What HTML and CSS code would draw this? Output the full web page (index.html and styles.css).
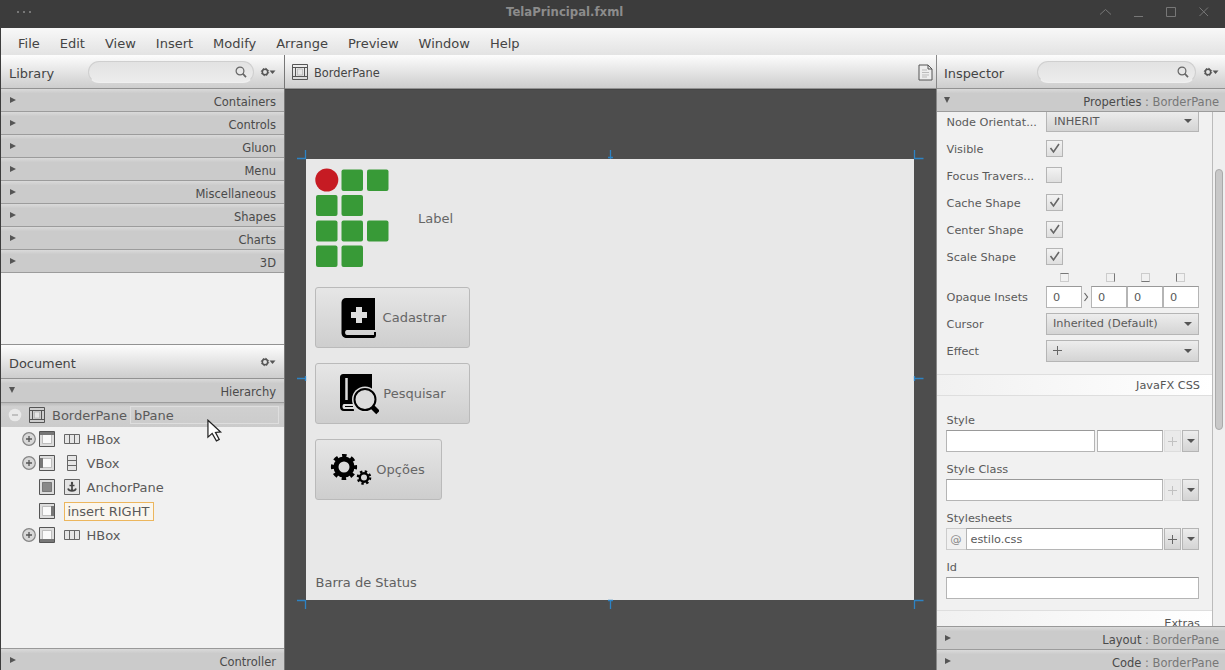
FILE: index.html
```html
<!DOCTYPE html>
<html lang="en">
<head>
<meta charset="utf-8">
<title>TelaPrincipal.fxml</title>
<link rel="stylesheet" href="styles.css">
</head>
<body>
<svg class="defs" aria-hidden="true">
  <symbol id="search" viewBox="0 0 12 12"><circle cx="5" cy="5" r="3.9" fill="none" stroke="#666" stroke-width="1.2"/><path d="M7.7 7.7L11 11.2" stroke="#666" stroke-width="1.7"/></symbol>
  <symbol id="gear" viewBox="0 0 16 10"><circle cx="5" cy="5" r="2.7" fill="none" stroke="#555" stroke-width="1.5"/><circle cx="5" cy="5" r="3.7" fill="none" stroke="#555" stroke-width="1" stroke-dasharray="1.45 1.45"/><path d="M9.500 3.500h6l-3 3.500z" fill="#555"/></symbol>
  <symbol id="pane" viewBox="0 0 16 16"><path d="M.5.5h15v15H.5zM.5 3.500h15M.5 12.500h15M3.500 3.500v9M12.500 3.500v9" fill="none" stroke="#555"/><path d="M5.500 5h5v6h-5z" fill="#e5e5e5" stroke="#aaa" stroke-width=".6"/></symbol>
  <symbol id="plus" viewBox="0 0 14 14"><circle cx="7" cy="7" r="6.300" fill="#d8d8d8" stroke="#858585" stroke-width="1.200"/><path d="M4 7h6M7 4v6" stroke="#555" stroke-width="1.300"/></symbol>
  <symbol id="hbox" viewBox="0 0 16 12"><path d="M.5 1.500h15v9H.5zM5.500 1.500v9M10.500 1.500v9" fill="#e6e6e6" stroke="#666"/></symbol>
  <symbol id="slot" viewBox="0 0 16 16"><path d="M.5.5h15v15H.5z" fill="#ddd" stroke="#555"/><path d="M3.500 3.500h9v9h-9z" fill="#fafafa" stroke="#aaa" stroke-width=".7"/></symbol>
  <symbol id="check" viewBox="0 0 15 15"><path d="M3.500 7l3 4L12 3" fill="none" stroke="#666" stroke-width="1.600"/></symbol>
</svg>
<div class="window">
  <header class="titlebar">
    <span class="dots"><i></i><i></i><i></i></span>
    <span class="title">TelaPrincipal.fxml</span>
    <svg class="winbtns" viewBox="0 0 112 14" fill="none" stroke="#777" stroke-width="1"><path d="M1 9.500l5.500-5 5.500 5M35 11.500h9M67.500 2.500h9v9h-9zM100.500 2.500l8.500 8.500M109 2.500l-8.500 8.500"/></svg>
  </header>
  <nav class="menubar"><span>File</span><span>Edit</span><span>View</span><span>Insert</span><span>Modify</span><span>Arrange</span><span>Preview</span><span>Window</span><span>Help</span></nav>
  <main class="main">
    <aside class="left">
      <div class="bar"><span class="bar-title">Library</span><div class="search"><svg><use href="#search"/></svg></div><svg class="gear"><use href="#gear"/></svg></div>
      <div class="acc"><i class="tri"></i><span>Containers</span></div>
      <div class="acc"><i class="tri"></i><span>Controls</span></div>
      <div class="acc"><i class="tri"></i><span>Gluon</span></div>
      <div class="acc"><i class="tri"></i><span>Menu</span></div>
      <div class="acc"><i class="tri"></i><span>Miscellaneous</span></div>
      <div class="acc"><i class="tri"></i><span>Shapes</span></div>
      <div class="acc"><i class="tri"></i><span>Charts</span></div>
      <div class="acc"><i class="tri"></i><span>3D</span></div>
      <div class="blank"></div>
      <div class="bar"><span class="bar-title">Document</span><svg class="gear"><use href="#gear"/></svg></div>
      <div class="acc acc-open"><i class="tri down"></i><span>Hierarchy</span></div>
      <div class="tree">
        <div class="node selected">
          <svg class="minus" viewBox="0 0 14 14"><circle cx="7" cy="7" r="6.300" fill="#e9e9e9"/><path d="M4 7h6" stroke="#aaa" stroke-width="1.300"/></svg>
          <svg class="ico root-ico"><use href="#pane"/></svg><span>BorderPane</span><span class="fxid">bPane</span>
        </div>
        <div class="node"><svg class="plus"><use href="#plus"/></svg><svg class="ico slot" viewBox="0 0 16 16"><use href="#slot"/><path d="M1 1h14v3H1z" fill="#777"/></svg><svg class="ico hb"><use href="#hbox"/></svg><span>HBox</span></div>
        <div class="node"><svg class="plus"><use href="#plus"/></svg><svg class="ico slot" viewBox="0 0 16 16"><use href="#slot"/><path d="M1 3h3v10H1z" fill="#777"/></svg><svg class="ico" viewBox="0 0 16 16"><path d="M3.500.5h9v15h-9zM3.500 5.500h9M3.500 10.500h9" fill="#e6e6e6" stroke="#666"/></svg><span>VBox</span></div>
        <div class="node"><i class="plus"></i><svg class="ico slot" viewBox="0 0 16 16"><use href="#slot"/><path d="M3.500 3.500h9v9h-9z" fill="#888" stroke="#777"/></svg><svg class="ico" viewBox="0 0 16 16"><path d="M.5.500h15v15H.5z" fill="#e4e4e4" stroke="#666"/><circle cx="8" cy="4" r="1.200" fill="#444"/><path d="M8 4v8M5.500 6.500h5M4 9.500c.5 2 2 2.300 4 2.300s3.500-.3 4-2.300" fill="none" stroke="#444" stroke-width="1.700"/></svg><span>AnchorPane</span></div>
        <div class="node"><i class="plus"></i><svg class="ico slot" viewBox="0 0 16 16"><use href="#slot"/><path d="M12 3h3v10h-3z" fill="#777"/></svg><span class="insert">insert RIGHT</span></div>
        <div class="node"><svg class="plus"><use href="#plus"/></svg><svg class="ico slot" viewBox="0 0 16 16"><use href="#slot"/><path d="M1 12h14v3H1z" fill="#777"/></svg><svg class="ico hb"><use href="#hbox"/></svg><span>HBox</span></div>
        <svg class="cursor" viewBox="0 0 17 25"><path d="M1 1v18l4.500-4 4.500 8 3-1.500-4-7.500 5.500-.5z" fill="#fff" stroke="#222" stroke-width="1.300"/></svg>
      </div>
      <div class="acc"><i class="tri"></i><span>Controller</span></div>
    </aside>
    <section class="center">
      <div class="bar crumb"><svg class="ico"><use href="#pane"/></svg><span>BorderPane</span>
        <svg class="doc" viewBox="0 0 15 17"><path d="M1 1h9l4 4v11H1zM10 1v4h4" fill="#eee" stroke="#555"/><path d="M4 6h5M4 8.500h7M4 11h7M4 13h5" stroke="#bbb"/></svg></div>
      <div class="canvas">
        <div class="stage">
          <div class="head">
            <svg class="logo" viewBox="0 0 74 100"><circle cx="11.800" cy="12" r="11.500" fill="#c61b23"/><g fill="#389a37"><rect x="26.500" y="1.500" width="21.500" height="21.500" rx="2"/><rect x="52" y="1.500" width="21.500" height="21.500" rx="2"/><rect x="1" y="27" width="21.500" height="21" rx="2"/><rect x="26.500" y="27" width="21.500" height="21" rx="2"/><rect x="1" y="52.500" width="21.500" height="21" rx="2"/><rect x="26.500" y="52.500" width="21.500" height="21" rx="2"/><rect x="52" y="52.500" width="21.500" height="21" rx="2"/><rect x="1" y="77.500" width="21.500" height="21.500" rx="2"/><rect x="26.500" y="77.500" width="21.500" height="21.500" rx="2"/></g></svg>
            <span>Label</span>
          </div>
          <div class="buttons">
            <button class="btn wide"><svg viewBox="0 0 40 44"><path d="M7 2h29v32H8c-2.500 0-2.500 5 0 5h27v-3h2v3c0 2-1 3-2.500 3H8c-3 0-5.500-2-5.500-5V6.500c0-2.500 2-4.500 4.500-4.500z" /><path d="M17 11h6v5h5v6h-5v5h-6v-5h-5v-6h5z" fill="#ddd"/></svg>Cadastrar</button>
            <button class="btn wide"><svg viewBox="0 0 40 44"><path d="M5 2h28v16c-9-4-19 2-19 13l1 8H5c-3 0-4-2-4-4V6c0-3 1-4 4-4z"/><path d="M7.500 6v22" stroke="#ddd" stroke-width="2.500"/><path d="M5 32h10v5H5c-2 0-2-5 0-5z" fill="#ddd"/><path d="M6 34.500h8" stroke="#000"/><circle cx="26" cy="27.500" r="13" fill="#dcdcdc"/><circle cx="26" cy="27.500" r="10.500" fill="none" stroke="#000" stroke-width="2"/><path d="M33 34.500l6 6" stroke="#000" stroke-width="5"/></svg>Pesquisar</button>
            <button class="btn"><svg viewBox="0 0 42 34"><g fill="none" stroke="#000"><circle cx="14" cy="14" r="8" stroke-width="5"/><circle cx="14" cy="14" r="11.400" stroke-width="3.400" stroke-dasharray="4.480 4.474" stroke-dashoffset="2.240"/><circle cx="34" cy="24.500" r="4.200" stroke-width="2.400"/><circle cx="34" cy="24.500" r="6.100" stroke-width="2.400" stroke-dasharray="2.395 2.395"/></g></svg>Opções</button>
          </div>
          <div class="status">Barra de Status</div>
          <svg class="handles" viewBox="0 0 628 462" fill="none" stroke="#2d83c4" stroke-width="1.300"><path d="M1 9.500h8.500V1M314.500 1v9M312 8.500h5M618.500 1v8.500h9M1 229.500h9M9.500 227v5M618.500 227v5M618.500 229.500h9M1 451.500h8.500M9.500 451v9M312 451.500h5M314.500 451v9M618.500 460v-8.500h9"/></svg>
        </div>
      </div>
    </section>
    <aside class="right">
      <div class="bar"><span class="bar-title">Inspector</span><div class="search"><svg><use href="#search"/></svg></div><svg class="gear"><use href="#gear"/></svg></div>
      <div class="acc acc-open"><i class="tri down"></i><span>Properties <em>: BorderPane</em></span></div>
      <div class="props">
        <div class="form">
          <div class="row first"><label>Node Orientat...</label><div class="combo">INHERIT<i class="arr"></i></div></div>
          <div class="row"><label>Visible</label><svg class="chk"><use href="#check"/></svg></div>
          <div class="row"><label>Focus Travers...</label><svg class="chk off"></svg></div>
          <div class="row"><label>Cache Shape</label><svg class="chk"><use href="#check"/></svg></div>
          <div class="row"><label>Center Shape</label><svg class="chk"><use href="#check"/></svg></div>
          <div class="row"><label>Scale Shape</label><svg class="chk"><use href="#check"/></svg></div>
          <div class="sides"><i class="t"></i><i class="r"></i><i class="b"></i><i class="l"></i></div>
          <div class="row insets"><label>Opaque Insets</label><div class="in num">0</div><svg class="chev" viewBox="0 0 8 12"><path d="M2 2l3 4-3 4" fill="none" stroke="#666" stroke-width="1.200"/></svg><div class="in num">0</div><div class="in num">0</div><div class="in num">0</div></div>
          <div class="row"><label>Cursor</label><div class="combo">Inherited (Default)<i class="arr"></i></div></div>
          <div class="row"><label>Effect</label><div class="combo"><b class="add"></b><i class="arr"></i></div></div>
          <div class="section css">JavaFX CSS</div>
          <div class="field"><label>Style</label><div class="line"><div class="in a"></div><div class="in b"></div><div class="sq dim"><b class="add"></b></div><div class="sq"><i class="arr"></i></div></div></div>
          <div class="field"><label>Style Class</label><div class="line"><div class="in grow"></div><div class="sq dim"><b class="add"></b></div><div class="sq"><i class="arr"></i></div></div></div>
          <div class="field"><label>Stylesheets</label><div class="line"><div class="at">@</div><div class="in grow file">estilo.css</div><div class="sq"><b class="add"></b></div><div class="sq"><i class="arr"></i></div></div></div>
          <div class="field"><label>Id</label><div class="line"><div class="in full"></div></div></div>
          <div class="section extras">Extras</div>
        </div>
        <div class="scroll"><div class="thumb"></div></div>
      </div>
      <div class="acc"><i class="tri"></i><span>Layout <em>: BorderPane</em></span></div>
      <div class="acc last"><i class="tri"></i><span>Code <em>: BorderPane</em></span></div>
    </aside>
  </main>
</div>
</body>
</html>
```

FILE: styles.css
```css
* { box-sizing: border-box; }
body { margin: 0; font-family: "DejaVu Sans", sans-serif; font-size: 13px; color: #505050; overflow: hidden; }
.defs { display: none; }
.window { width: 1225px; height: 670px; display: flex; flex-direction: column; background: #3c3c3c; padding-left: 1px; overflow: hidden; }
.titlebar { height: 28px; flex: none; display: flex; align-items: center; background: #3c3c3c; padding: 0 14px 4px 16px; }
.dots { display: flex; gap: 4px; width: 489px; }
.dots i { width: 2px; height: 2px; background: #777; }
.title { font-weight: bold; font-size: 11.700px; color: #8c8c8c; }
.winbtns { width: 112px; height: 14px; margin-left: auto; }
.menubar { height: 27px; flex: none; display: flex; align-items: center; gap: 20px; padding: 3px 17px 0; background: linear-gradient(#f8f8f8, #e3e3e3); color: #444; }
.main { flex: 1; min-height: 0; display: flex; }
.left { width: 284px; flex: none; display: flex; flex-direction: column; background: #f1f1f1; border-right: 1px solid #777; }
.bar { height: 34px; flex: none; display: flex; align-items: center; background: linear-gradient(#fdfdfd, #ececec 35%, #cdcdcd); border-bottom: 1px solid #929292; padding: 2px 8px 0; }
.bar-title { font-size: 12.900px; color: #444; padding-top: 1px; }
.search { width: 166px; height: 22px; margin: 0 6px 2px auto; border: 1px solid #cfcfcf; border-bottom-color: #f0f0f0; border-radius: 11px; background: linear-gradient(#e2e2e2, #ececec); display: flex; justify-content: flex-end; align-items: center; padding-right: 6px; }
.search svg { width: 12px; height: 12px; }
.gear { width: 16px; height: 10px; margin-bottom: 2px; }
.bar > .bar-title + .gear { margin-left: auto; }
.acc { height: 23px; flex: none; display: flex; align-items: center; justify-content: space-between; padding: 2px 8px 0; font-size: 11.500px; color: #4a4a4a; background: linear-gradient(#dadada, #cbcbcb 20%, #cbcbcb); border-bottom: 1px solid #9c9c9c; }
.acc span { padding-top: 1px; }
.acc em { font-style: normal; color: #777; }
.tri { border: 3.500px solid transparent; border-left: 6px solid #555; border-right: 0; margin: 0 0 3px 1px; }
.tri.down { border: 3.500px solid transparent; border-top: 6px solid #555; border-bottom: 0; margin: 0 0 2px; }
.blank { height: 72px; flex: none; border-bottom: 1px solid #929292; }
.left .acc-open { height: 24px; padding-top: 1px; }
.tree { height: 246px; flex: none; position: relative; border-bottom: 1px solid #999; }
.node { height: 24px; display: flex; align-items: center; padding-left: 20.500px; color: #5a5a5a; }
.node.selected { padding: 0 5px 0 7px; background: linear-gradient(#bbb, #d0d0d0 15%, #cbcbcb); }
.node .plus { width: 14px; height: 14px; margin-right: 3px; }
.minus { width: 14px; height: 14px; margin-right: 7px; }
.ico { width: 16px; height: 16px; flex: none; margin-right: 7px; }
.slot { margin-right: 9px; }
.hb { height: 12px; }
.fxid { flex: 1; height: 18px; line-height: 17px; margin-left: 3px; padding-left: 3px; border: 1px solid #dedede; }
.insert { line-height: 17px; border: 1px solid #ecb65d; background: #faf6ee; padding: 0 4px 0 3px; }
.cursor { position: absolute; left: 206px; top: 16px; width: 16px; height: 24px; }
.center { width: 651px; flex: none; display: flex; flex-direction: column; }
.crumb { font-size: 11.400px; padding-left: 7px; color: #444; }
.crumb span { padding-top: 1px; }
.crumb .ico { margin: 0 6px 2px 0; }
.doc { width: 15px; height: 17px; margin: 0 -5px 1px auto; }
.canvas { flex: 1; background: #4d4d4d; padding: 69px 22px 70px 21px; border-top: 1px solid #444; display: flex; }
.stage { flex: 1; position: relative; background: #e8e8e8; display: flex; flex-direction: column; }
.head { display: flex; align-items: center; gap: 29px; padding: 9px 0 0 9px; color: #666; }
.logo { width: 74px; height: 100px; display: block; }
.buttons { display: flex; flex-direction: column; align-items: flex-start; gap: 15px; padding: 19px 0 0 9px; }
.btn { height: 61px; width: 127px; margin: 0; padding: 0 2px 0 0; font: 13px "DejaVu Sans", sans-serif; color: #666; display: flex; align-items: center; justify-content: center; gap: 4px; background: linear-gradient(#e6e6e6, #cecece); border: 1px solid #bababa; border-radius: 3px; }
.btn.wide { width: 155px; padding: 0; }
.btn svg { width: 42px; height: 34px; }
.btn.wide svg { width: 40px; height: 44px; }
.status { margin-top: auto; padding: 0 0 9px 9.500px; color: #606060; line-height: 16px; }
.handles { position: absolute; left: -10px; top: -10px; width: 628px; height: 462px; }
.right { flex: 1; min-width: 0; display: flex; flex-direction: column; background: #f1f1f1; border-left: 1px solid #888; }
.right .bar { padding: 2px 6px 0 7px; }
.right .search { width: 159px; margin-right: 7px; }
.right .acc { padding: 2px 6px 0 7px; }
.props { height: 515px; flex: none; display: flex; overflow: hidden; border-bottom: 1px solid #999; }
.form { width: 276px; flex: none; border-right: 1px solid #bbb; font-size: 11.300px; color: #5a5a5a; overflow: hidden; }
.row { height: 27px; display: flex; align-items: center; padding-left: 9px; }
.row.first { margin-top: -4px; }
.row label { width: 100px; flex: none; padding: 1px 0 0 0.5px; white-space: nowrap; }
.combo { width: 153px; height: 22px; display: flex; align-items: center; justify-content: space-between; padding: 0 6px; border: 1px solid #b5b5b5; background: linear-gradient(#ededed, #d4d4d4); }
.row.first .combo { margin-top: -1px; padding-left: 7px; }
.arr { border: 4px solid transparent; border-top: 4px solid #555; border-bottom: 0; }
.chk { width: 17px; height: 17px; margin-bottom: 1px; border: 1px solid #b5b5b5; background: linear-gradient(#f3f3f3, #dfdfdf); }
.chk.off { width: 16px; height: 16px; margin-bottom: 2px; }
.sides { height: 10px; display: flex; padding-left: 123px; margin-top: 3px; }
.sides i { width: 9px; height: 9px; border: 1px solid #ccc; margin-right: 37px; }
.sides i + i { margin-right: 26px; }
.sides .t { border-top-color: #777; }
.sides .r { border-right-color: #777; }
.sides .b { border-bottom-color: #777; }
.sides .l { border-left-color: #777; }
.row.insets { height: 28px; }
.in { height: 22px; background: #fff; border: 1px solid #b5b5b5; border-top-color: #999; line-height: 21px; }
.num { width: 36px; padding-left: 6px; }
.chev { width: 9px; height: 12px; }
.add { width: 9px; height: 9px; background: linear-gradient(#666, #666) center / 9px 1px no-repeat, linear-gradient(#666, #666) center / 1px 9px no-repeat; }
.section { height: 22px; border: 1px solid #dedede; border-width: 1px 0; background: linear-gradient(90deg, #f1f1f1, #fff); text-align: right; padding-right: 12px; line-height: 22px; color: #555; }
.css { margin: 10px 0 16px; }
.insets + .row { margin-top: -1px; }
.field { height: 49px; padding: 0 13px 0 9.500px; }
.field label { display: block; height: 18px; line-height: 17px; }
.line { display: flex; height: 22px; margin-left: -1px; }
.a { width: 150px; margin-right: 2px; }
.b { width: 66px; }
.sq { width: 17px; margin-left: 1px; border: 1px solid #b5b5b5; background: linear-gradient(#ededed, #d4d4d4); display: flex; align-items: center; justify-content: center; }
.sq.dim { border-color: #ddd; background: #eaeaea; }
.dim .add { opacity: .3; }
.grow { flex: 1; }
.full { width: 254px; }
.at { width: 20px; border: 1px solid #ccc; border-right: 0; line-height: 21px; text-align: center; color: #888; }
.line .file { padding-left: 4px; line-height: 22px; }
.extras { margin-top: 2px; line-height: 26px; }
.scroll { flex: 1; padding: 57px 0 0 2px; background: #efefef; }
.thumb { width: 8px; height: 261px; border: 1px solid #aaa; border-radius: 4px; background: #c8c8c8; }
```
